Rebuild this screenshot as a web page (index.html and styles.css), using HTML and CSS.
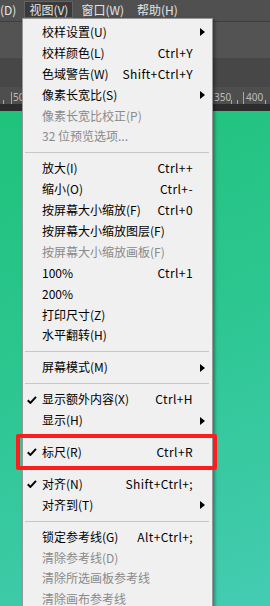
FILE: index.html
```html
<!DOCTYPE html>
<html>
<head>
    <meta charset="utf-8">
    <title>视图菜单</title>
    <link rel="stylesheet" href="styles.css">
</head>
<body>
    <div class="screen">
        <div class="menubar">
            <span class="mb-item">(D)</span>
            <span class="mb-item open">视图(V)</span>
            <span class="mb-item">窗口(W)</span>
            <span class="mb-item">帮助(H)</span>
        </div>
        <div class="toolbar"></div>
        <div class="options"></div>
        <svg class="ruler" width="270" height="17" viewBox="0 0 270 17">
            <line x1="3.5" y1="13" x2="3.5" y2="17" />
            <line x1="11.5" y1="5" x2="11.5" y2="17" />
            <text x="13" y="14">50</text>
            <text x="214" y="14">350</text>
            <line x1="231.5" y1="13" x2="231.5" y2="17" />
            <line x1="237.5" y1="13" x2="237.5" y2="17" />
            <line x1="243.5" y1="5" x2="243.5" y2="17" />
            <text x="246" y="14">400</text>
            <line x1="265.5" y1="13" x2="265.5" y2="17" />
        </svg>
        <div class="gutter"></div>
        <div class="canvas"></div>

        <div class="dropdown">
            <div class="row"><span class="label">校样设置(U)</span><span class="arrow"></span></div>
            <div class="row"><span class="label">校样颜色(L)</span><span class="key">Ctrl+Y</span></div>
            <div class="row"><span class="label">色域警告(W)</span><span class="key">Shift+Ctrl+Y</span></div>
            <div class="row"><span class="label">像素长宽比(S)</span><span class="arrow"></span></div>
            <div class="row off"><span class="label">像素长宽比校正(P)</span></div>
            <div class="row off"><span class="label">32 位预览选项...</span></div>
            <div class="sep"></div>
            <div class="row"><span class="label">放大(I)</span><span class="key">Ctrl++</span></div>
            <div class="row"><span class="label">缩小(O)</span><span class="key">Ctrl+-</span></div>
            <div class="row"><span class="label">按屏幕大小缩放(F)</span><span class="key">Ctrl+0</span></div>
            <div class="row"><span class="label">按屏幕大小缩放图层(F)</span></div>
            <div class="row off"><span class="label">按屏幕大小缩放画板(F)</span></div>
            <div class="row"><span class="label">100%</span><span class="key">Ctrl+1</span></div>
            <div class="row"><span class="label">200%</span></div>
            <div class="row"><span class="label">打印尺寸(Z)</span></div>
            <div class="row"><span class="label">水平翻转(H)</span></div>
            <div class="sep"></div>
            <div class="row"><span class="label">屏幕模式(M)</span><span class="arrow"></span></div>
            <div class="sep"></div>
            <div class="row"><span class="check"><svg width="10" height="8" viewBox="0 0 10 8"><path d="M0.8 4.2 L3.4 6.9 L9 0.9" /></svg></span><span class="label">显示额外内容(X)</span><span class="key">Ctrl+H</span></div>
            <div class="row"><span class="label">显示(H)</span><span class="arrow"></span></div>
            <div class="sep"></div>
            <div class="row"><span class="check"><svg width="10" height="8" viewBox="0 0 10 8"><path d="M0.8 4.2 L3.4 6.9 L9 0.9" /></svg></span><span class="label">标尺(R)</span><span class="key">Ctrl+R</span></div>
            <div class="sep"></div>
            <div class="row"><span class="check"><svg width="10" height="8" viewBox="0 0 10 8"><path d="M0.8 4.2 L3.4 6.9 L9 0.9" /></svg></span><span class="label">对齐(N)</span><span class="key">Shift+Ctrl+;</span></div>
            <div class="row"><span class="label">对齐到(T)</span><span class="arrow"></span></div>
            <div class="sep"></div>
            <div class="row"><span class="label">锁定参考线(G)</span><span class="key">Alt+Ctrl+;</span></div>
            <div class="row off"><span class="label">清除参考线(D)</span></div>
            <div class="row off"><span class="label">清除所选画板参考线</span></div>
            <div class="row off"><span class="label">清除画布参考线</span></div>
        </div>

        <div class="mark"></div>
    </div>
</body>
</html>
```

FILE: styles.css
```css
body {
    margin: 0;
    font-family: "Noto Sans CJK SC", "Noto Sans", sans-serif;
}

.screen {
    position: relative;
    width: 270px;
    height: 606px;
    overflow: hidden;
    display: flex;
    flex-direction: column;
    background-color: #2b2b2b;
}

/* top menu bar */
.menubar {
    height: 22px;
    box-sizing: border-box;
    border-bottom: 1px solid #3e3e3e;
    background-color: #505050;
    display: flex;
    align-items: flex-start;
    gap: 3px;
    font-size: 12px;
    color: #e4e4e4;
}

.mb-item {
    height: 17px;
    line-height: 17px;
    padding: 0 5px;
    margin-top: 1px;
    box-sizing: border-box;
}

.mb-item:first-child {
    padding-left: 0;
}

.mb-item.open {
    background-color: #3a3a3a;
    border: 1px solid #626262;
    line-height: 15px;
    padding: 0 4px;
}

.toolbar {
    height: 36px;
    background-color: #535353;
}

.options {
    height: 29px;
    background-color: #474747;
}

.ruler {
    display: block;
    background-color: #4e4e4e;
}

.ruler line {
    stroke: #a8a8a8;
    stroke-width: 1;
}

.ruler text {
    fill: #bdbdbd;
    font-family: "Noto Sans", sans-serif;
    font-size: 10px;
}

.gutter {
    height: 7px;
    background-color: #2c2c2c;
}

.canvas {
    flex: 1;
    background: linear-gradient(160deg, #1fc27b 0%, #2cc690 45%, #44ccb2 100%);
}

/* dropdown */
.dropdown {
    position: absolute;
    left: 22px;
    top: 18px;
    width: 191px;
    box-sizing: border-box;
    padding-top: 3px;
    background-color: #f0f0f0;
    border: 1px solid #979797;
    box-shadow: 2px 2px 3px rgba(0, 0, 0, 0.35);
    font-size: 12px;
    color: #000;
}

.row {
    height: 20.9px;
    line-height: 20.9px;
    display: grid;
    grid-template-columns: 19px 1fr auto 19px;
    align-items: center;
    white-space: nowrap;
}

.label {
    grid-column: 2;
}

.key {
    grid-column: 3;
    letter-spacing: 0.4px;
}

.check {
    grid-column: 1;
    grid-row: 1;
    display: flex;
    justify-content: flex-end;
    padding-right: 5px;
}

.check svg {
    display: block;
}

.check path {
    fill: none;
    stroke: #000;
    stroke-width: 2;
}

.arrow {
    grid-column: 4;
    justify-self: start;
    margin-left: 7px;
    width: 0;
    height: 0;
    border-left: 5px solid #000;
    border-top: 4.5px solid transparent;
    border-bottom: 4.5px solid transparent;
}

.off {
    color: #8a8a8a;
}

.sep {
    height: 1px;
    margin: 5px 3px 5px 2px;
    background-color: #c6c6c6;
}

/* red highlight */
.mark {
    position: absolute;
    left: 16px;
    top: 434px;
    width: 201px;
    height: 36px;
    box-sizing: border-box;
    border: 4px solid #fc1e1e;
    border-radius: 2px;
}
```
